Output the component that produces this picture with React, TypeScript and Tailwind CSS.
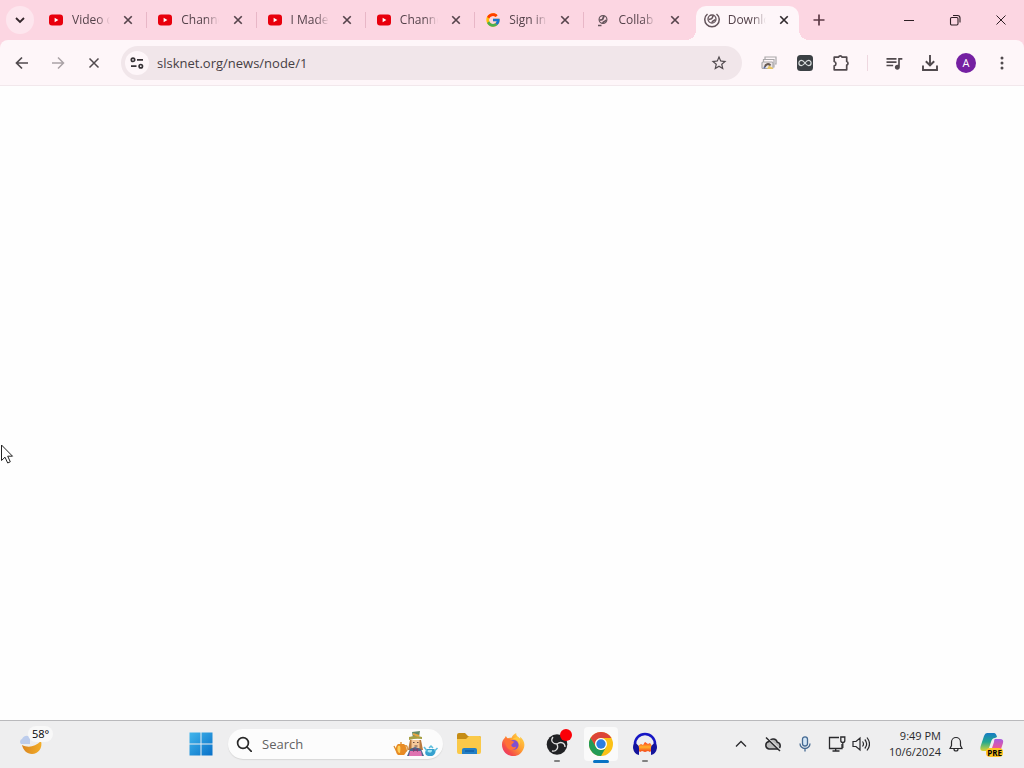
import React from "react";
import { FcGoogle } from "react-icons/fc";
import { MdQueueMusic, MdStarBorder } from "react-icons/md";

type Kind = "youtube" | "google" | "globe" | "loading";

const tabs: { title: string; kind: Kind; active?: boolean }[] = [
  { title: "Video d", kind: "youtube" },
  { title: "Channe", kind: "youtube" },
  { title: "I Made", kind: "youtube" },
  { title: "Channe", kind: "youtube" },
  { title: "Sign in", kind: "google" },
  { title: "Collab", kind: "globe" },
  { title: "Downlo", kind: "loading", active: true },
];

function YouTube() {
  return (
    <svg viewBox="0 0 16 16" className="size-4 shrink-0">
      <rect x="1" y="2.5" width="14" height="11" rx="3" fill="#e8000d" />
      <path d="M6.6 5.8v4.4L10.4 8z" fill="#fff" />
    </svg>
  );
}

function Globe() {
  return (
    <svg viewBox="0 0 16 16" className="size-4 shrink-0" fill="none" stroke="#64545b">
      <circle cx="9" cy="7.5" r="3.9" strokeWidth="1.2" />
      <path d="M5.5 8.2c1.5-.7 2 .2 3-.8s.2-2 1.8-3.4" strokeWidth="1.8" />
      <path d="M8.8 11.3c.2-2 2-1.400 3.500-3.400" strokeWidth="1.700" />
      <path d="M4 13.500h3.500" strokeWidth="1.500" />
    </svg>
  );
}

function LoadingGlobe() {
  return (
    <svg viewBox="0 0 16 16" className="size-4 shrink-0" fill="none" stroke="#64545b">
      <path d="M3.500 2A7.200 7.200 0 1 0 12.500 2" strokeWidth="1.500" />
      <circle cx="8" cy="7" r="4" strokeWidth="1.300" />
      <path d="M4.800 7.500c2-.7 2.200-.2 3-1s.2-1.800 1.700-2.500M8 10.300c.3-1.600 1.800-1.200 3.400-2.800" strokeWidth="1.500" />
    </svg>
  );
}

function Favicon({ kind }: { kind: Kind }) {
  if (kind === "youtube") return <YouTube />;
  if (kind === "google") return <FcGoogle className="size-4 shrink-0" />;
  if (kind === "globe") return <Globe />;
  return <LoadingGlobe />;
}

function Cross({ className }: { className: string }) {
  return (
    <svg viewBox="0 0 12 12" className={className} fill="none" stroke="currentColor">
      <path d="M1.500 1.500l9 9M10.500 1.500l-9 9" />
    </svg>
  );
}

function TabStrip() {
  return (
    <header className="flex h-10 bg-[#fcd6e2] pl-1.5">
      <button aria-label="Search tabs" className="mt-1.5 flex size-7 shrink-0 items-center justify-center rounded-full bg-[#fde6ee] text-[#33262b]">
        <svg viewBox="0 0 10 10" className="size-2.5" fill="none" stroke="currentColor" strokeWidth="1.800"><path d="M1 3l4 4 4-4" /></svg>
      </button>
      <nav aria-label="Tabs" className="ml-1 flex min-w-0 max-w-[765px] flex-1">
        {tabs.map((tab, i) => (
          <div key={i} className="relative flex min-w-0 flex-1 items-end">
            <div className={tab.active
              ? "relative flex h-[34px] min-w-0 flex-1 items-center rounded-t-[10px] bg-[#fef6f9] pb-1.5 pl-2 pr-2.5 ml-0.5 mr-1"
              : "flex h-[34px] min-w-0 flex-1 items-center pb-1.5 pl-2.5 pr-3.5"}>
              {tab.active && (
                <>
                  <span className="absolute bottom-0 right-full size-2.5 bg-[radial-gradient(circle_at_0_0,#fcd6e2_10px,#fef6f9_10px)]" />
                  <span className="absolute bottom-0 left-full size-2.5 bg-[radial-gradient(circle_at_100%_0,#fcd6e2_10px,#fef6f9_10px)]" />
                </>
              )}
              <Favicon kind={tab.kind} />
              <a href="#page" className="ml-2 block w-[38px] min-w-0 overflow-hidden whitespace-nowrap mask-r-from-65% mask-r-to-100% text-xs leading-4 text-[#55434b]">
                {tab.title}
              </a>
              <button aria-label={"Close " + tab.title} className={tab.active ? "ml-auto text-[#302a2d]" : "ml-auto text-[#55434b]"}>
                <Cross className="size-2.5 stroke-2" />
              </button>
            </div>
            {i < 5 && <span className="absolute right-0 top-3 h-4 w-px bg-[#e8b7c7]" />}
          </div>
        ))}
      </nav>
      <button aria-label="New tab" className="mt-1.5 ml-0.5 flex size-7 shrink-0 items-center justify-center text-[#5c3a46]">
        <svg viewBox="0 0 12 12" className="size-3" fill="none" stroke="currentColor" strokeWidth="1.700"><path d="M6 .5v11M.5 6h11" /></svg>
      </button>
      <div className="ml-auto flex shrink-0 text-[#2d1f24]">
        <button aria-label="Minimize" className="flex w-[46px] items-center justify-center"><span className="h-px w-2.5 bg-current" /></button>
        <button aria-label="Restore" className="flex w-[46px] items-center justify-center">
          <svg viewBox="0 0 12 12" className="size-3" fill="none" stroke="currentColor" strokeWidth="1.100">
            <rect x="1.500" y="3.500" width="7.500" height="7.500" rx="1.200" />
            <path d="M4 1.500h4.500a2.500 2.500 0 0 1 2.500 2.500v4.500" />
          </svg>
        </button>
        <button aria-label="Close window" className="flex w-[46px] items-center justify-center"><Cross className="size-3 stroke-1" /></button>
      </div>
    </header>
  );
}

function Toolbar() {
  const btn = "flex size-9 shrink-0 items-center justify-center";
  return (
    <div className="bg-[#fcd6e2]">
      <div className="flex h-[46px] items-center rounded-t-lg border-b border-[#f2e8ec] bg-[#fef6f9] px-1 text-[#514a4e]">
        <button aria-label="Back" className={btn}>
          <svg viewBox="0 0 16 16" className="size-4" fill="none" stroke="currentColor" strokeWidth="1.700"><path d="M14 8H3M8 2.500L2.500 8 8 13.500" /></svg>
        </button>
        <button aria-label="Forward" className={btn + " text-[#aaa2a6]"}>
          <svg viewBox="0 0 16 16" className="size-4" fill="none" stroke="currentColor" strokeWidth="1.500"><path d="M2 8h11M8 2.500L13.500 8 8 13.500" /></svg>
        </button>
        <button aria-label="Stop loading" className={btn}><Cross className="size-3 stroke-[1.5]" /></button>
        <form className="ml-[9px] flex h-[34px] min-w-0 flex-1 items-center rounded-full bg-[#f1e6ea] pl-1 pr-3.5" onSubmit={(e) => e.preventDefault()}>
          <button type="button" aria-label="Site information" className="flex size-6 shrink-0 items-center justify-center rounded-full bg-[#fef6f9]">
            <svg viewBox="0 0 14 14" className="size-3.5" fill="none" stroke="#373236" strokeWidth="1.700">
              <circle cx="3" cy="3.800" r="1.700" /><path d="M7 3.800h6M1 10.200h5.500" /><circle cx="10.800" cy="10.200" r="1.700" />
            </svg>
          </button>
          <input aria-label="Address" defaultValue="slsknet.org/news/node/1" className="ml-2 min-w-0 flex-1 bg-transparent text-[13px] leading-5 text-[#464044] outline-none" />
          <button type="button" aria-label="Bookmark this page"><MdStarBorder className="size-[18px]" /></button>
        </form>
        <div className="ml-[9px] flex shrink-0 items-center">
          <button aria-label="Screenshot extension" className={btn}>
            <svg viewBox="0 0 16 16" className="size-4" fill="none" stroke="#aaa8aa" strokeWidth="1.200">
              <path d="M4 4V2h11v7h-1" /><path d="M2.500 7V4.500h10.500v8" /><rect x="1" y="7" width="11" height="6.500" rx="1" fill="#eee6e6" />
              <path d="M4 12a3 3 0 0 1 5.500-1.500" stroke="#665953" strokeWidth="2" /><path d="M8 10.500l4 2.500v1H6z" fill="#e7c563" stroke="none" />
              <circle cx="3.500" cy="12.500" r="1" fill="#536ca6" stroke="none" />
            </svg>
          </button>
          <button aria-label="Infinity extension" className={btn}>
            <svg viewBox="0 0 16 16" className="size-4">
              <rect width="16" height="16" rx="3.500" fill="#3b4044" />
              <path d="M8 8C6.500 6 5.500 5.400 4.500 5.400a2.600 2.600 0 0 0 0 5.200C5.500 10.600 6.500 10 8 8s2.500-2.600 3.500-2.600a2.600 2.600 0 0 1 0 5.200c-1 0-2-.6-3.500-2.600z" fill="none" stroke="#d8dddd" strokeWidth="1.200" />
            </svg>
          </button>
          <button aria-label="Extensions" className={btn}>
            <svg viewBox="0 0 20 20" className="size-5" fill="none" stroke="currentColor" strokeWidth="1.700" strokeLinejoin="round">
              <path d="M3.200 4.200h4.300a1.900 1.900 0 0 1 3.600 0h4.600v4.300a1.900 1.900 0 0 1 0 3.600v4.700H3.200v-4a2.200 2.200 0 0 0 0-4.300z" />
            </svg>
          </button>
          <span className="mx-2 h-4 w-px bg-[#eed8e0]" />
          <button aria-label="Media controls" className={btn}><MdQueueMusic className="size-5" /></button>
          <button aria-label="Downloads" className={btn}>
            <svg viewBox="0 0 18 18" className="size-[18px]" fill="none" stroke="currentColor" strokeWidth="1.900"><path d="M9 1v10M4.800 7.200L9 11.300l4.200-4.100M2 11.500V16h14v-4.500" /></svg>
          </button>
          <button aria-label="Profile" className={btn}><span className="flex size-5 items-center justify-center rounded-full bg-[#7520a2] text-[11px] leading-5 text-white">A</span></button>
          <button aria-label="Menu" className={btn}>
            <svg viewBox="0 0 4 16" className="h-4 w-1" fill="currentColor"><circle cx="2" cy="3" r="1.500" /><circle cx="2" cy="8" r="1.500" /><circle cx="2" cy="13" r="1.500" /></svg>
          </button>
        </div>
      </div>
    </div>
  );
}

function Tea() {
  return (
    <svg viewBox="0 0 46 26" className="h-[26px] w-[46px] shrink-0">
      <path d="M5 13h6c3 2 3 9 0 11H5c-3-2-3-9 0-11z" fill="#e88b24" />
      <path d="M5 15c2-1 3 0 2 7-3 0-3-5-2-7z" fill="#ffd05c" />
      <path d="M3.500 20L1 15M12 15c3-2 3 5 0 6M8 13v-2" stroke="#dc8b2b" strokeWidth="1.300" fill="none" />
      <path d="M17 9h11l2 10H15z" fill="#b9793e" />
      <path d="M18.500 9h8v8h-8z" fill="#f5c89b" />
      <path d="M19 1l8-1-1 6-6 1z" fill="#638a67" /><path d="M16 6q7-2 13 0v2q-6-1-13 1z" fill="#a6a044" />
      <path d="M20 3l6 2" stroke="#e7a641" strokeWidth="2" />
      <path d="M20 11.500h1.500M24 11.500h1.500M21.500 15h3" stroke="#684b42" />
      <path d="M14 25l3-7 5-2 6 2 3 7z" fill="#4c678d" /><path d="M17 20h11l1 5H16z" fill="#df73b1" /><path d="M20 17l2.500 2 2.500-2v4l-2.500-2-2.500 2z" fill="#803c6b" />
      <path d="M34 18h7c3 2 1 6-2 7h-4c-3-1-4-4-1-7z" fill="#36a1cf" /><path d="M31 16l4 5M41.500 20l3-3M36 17l2-2 2 2" stroke="#5bbddd" strokeWidth="1.500" fill="none" />
      <path d="M35 19h4c0 3-2 3-4 2z" fill="#a3e5f2" />
    </svg>
  );
}

function ChromeLogo() {
  return (
    <svg viewBox="0 0 24 24" className="size-6">
      <circle cx="12" cy="12" r="12" fill="#fbc116" />
      <path d="M1.600 6A12 12 0 0 0 12 24l5.200-9A6 6 0 0 1 6.800 15z" fill="#239b56" />
      <path d="M1.600 6A12 12 0 0 1 22.400 6H12a6 6 0 0 0-5.200 9z" fill="#dc4437" />
      <path d="M1.600 6l5.200 9L12 20l-5-1z" fill="#239b56" />
      <circle cx="12" cy="12" r="6" fill="#fff" /><circle cx="12" cy="12" r="4.700" fill="#2c7de1" />
    </svg>
  );
}

function Taskbar() {
  const app = "relative flex h-11 w-11 shrink-0 items-center justify-center";
  return (
    <footer className="flex h-12 items-center border-t border-[#b9b9bc] bg-[#eeeeef] pb-px text-[#29292c]">
      <button aria-label="Weather, 58 degrees" className="ml-4 flex h-10 w-9 items-center">
        <span className="relative block size-7">
          <svg viewBox="0 0 28 28" className="size-7">
            <defs><linearGradient id="moon" x1="0" x2="1"><stop stopColor="#d98522" /><stop offset="1" stopColor="#f3ad27" /></linearGradient></defs>
            <path d="M6 15c6 3 13 2 19-4 2 7-3 13-9 13-5 0-9-4-10-9z" fill="url(#moon)" />
            <path d="M5 14a3 3 0 0 1 1-5c2-4 7-4 8-1v6z" fill="#bcccec" />
          </svg>
          <span className="absolute -top-1 left-3 rounded-full bg-[#f8f8f8] px-1 text-[11px] leading-4 text-black">58°</span>
        </span>
      </button>
      <div className="ml-[127px] flex shrink-0 items-center">
        <button aria-label="Start" className={app}>
          <svg viewBox="0 0 24 24" className="size-6">
            <defs><linearGradient id="win" x2="1" y2="1"><stop stopColor="#42b6ec" /><stop offset="1" stopColor="#0870c8" /></linearGradient></defs>
            <path d="M.5.5h11v11H.5zM12.500.5h11v11h-11zM.5 12.500h11v11H.5zM12.500 12.500h11v11h-11z" fill="url(#win)" />
          </svg>
        </button>
        <label className="ml-[5px] flex h-[30px] w-[215px] items-center rounded-full bg-[#fcfcfc] pl-2 pr-1 shadow-[0_1px_1px_#d7d7d7]">
          <svg viewBox="0 0 16 16" className="size-4 shrink-0" fill="none" stroke="#292929" strokeWidth="1.700"><circle cx="7" cy="7" r="5.400" /><path d="M11 11l4.300 4.300" strokeLinecap="round" /></svg>
          <input aria-label="Search" placeholder="Search" className="ml-2.5 min-w-0 flex-1 bg-transparent text-[13px] leading-5 outline-none placeholder:text-[#626262]" />
          <Tea />
        </label>
        <button aria-label="File Explorer" className={app + " ml-1"}>
          <svg viewBox="0 0 26 24" className="h-6 w-[26px]">
            <path d="M1 3q0-2 2-2h6l3 3h11q2 0 2 2v4H1z" fill="#c58c15" /><path d="M1 7h9l3-3h10q2 0 2 2v14q0 2-2 2H3q-2 0-2-2z" fill="#fac949" />
            <path d="M6 22v-4q0-2 2-2h11q2 0 2 2v4z" fill="#237fc5" /><path d="M9 19h9" stroke="#125fa7" strokeWidth="1.500" />
          </svg>
        </button>
        <button aria-label="Firefox" className={app}>
          <svg viewBox="0 0 24 24" className="size-[23px]">
            <defs><linearGradient id="fox" x1="1" x2="0" y2="1"><stop stopColor="#ffe44b" /><stop offset=".45" stopColor="#ff9b32" /><stop offset=".75" stopColor="#f44c4b" /><stop offset="1" stopColor="#e82b80" /></linearGradient></defs>
            <path d="M4 3l2 3c1-1 3-1 4-1 1-3 3-4 5-5-1 3 2 4 4 6V4c4 4 5 7 4 11-2 6-6 9-11 9C5 24 0 19 0 12c0-3 1-5 3-7z" fill="url(#fox)" />
            <circle cx="12" cy="12.500" r="5.300" fill="#8050cf" /><path d="M3 6c3-1 5 0 7 2l3 1-3 3c-1 2 2 4 5 2-1 4-6 5-9 2-2-2-3-6-3-10z" fill="#ff7137" /><path d="M11 6c4 0 7 3 7 7 2-3 1-7-2-9z" fill="#ffca3d" />
          </svg>
        </button>
        <button aria-label="OBS Studio" className={app}>
          <svg viewBox="0 0 24 24" className="size-6">
            <circle cx="12" cy="12.500" r="10.300" fill="#202124" />
            <path d="M12 12C8 12 5 9 8 5M12 12c4-3 8-1 8 3M12 12c2 4-1 8-5 7" fill="none" stroke="#dedede" strokeWidth="1.300" />
          </svg>
          <span className="absolute right-[7px] top-[7px] size-3 rounded-full bg-[#fb0007]" /><span className="absolute bottom-1 h-0.5 w-1.5 rounded-full bg-[#818181]" />
        </button>
        <button aria-label="Google Chrome" className={app}>
          <span className="flex size-[34px] items-center justify-center rounded bg-[#fafafa]"><ChromeLogo /></span>
          <span className="absolute bottom-[3px] h-[3px] w-4 rounded-full bg-[#0873c4]" />
        </button>
        <button aria-label="Audacity" className={app}>
          <svg viewBox="0 0 26 24" className="h-6 w-[26px]">
            <defs><linearGradient id="wave" x2="0" y2="1"><stop stopColor="#ff3718" /><stop offset=".5" stopColor="#ffb02a" /><stop offset="1" stopColor="#f43e15" /></linearGradient></defs>
            <path d="M6 14l3-2 2 1 2-3 3 2 2-1 2 3v4l-2 2-2-1-3 1-3-1-2 1-2-2z" fill="url(#wave)" />
            <path d="M3 15v-3a10 10 0 0 1 20 0v3" fill="none" stroke="#1616c4" strokeWidth="2.600" />
            <path d="M3 11q4 2 4 5v7q-5-1-6-7 0-4 2-5zm20 0q-4 2-4 5v7q5-1 6-7 0-4-2-5z" fill="#14149c" />
          </svg>
          <span className="absolute bottom-1 h-0.5 w-1.5 rounded-full bg-[#818181]" />
        </button>
      </div>
      <div className="ml-auto flex shrink-0 items-center pr-[11px]">
        <button aria-label="Show hidden icons" className="flex w-8 justify-center"><svg viewBox="0 0 12 12" className="size-3" fill="none" stroke="currentColor" strokeWidth="1.300"><path d="M1 8.500l5-5 5 5" /></svg></button>
        <button aria-label="Cloud sync off" className="flex w-8 justify-center">
          <svg viewBox="0 0 18 16" className="h-4 w-[18px]" fill="#b9b9b9" stroke="#29292c" strokeWidth="1.500"><path d="M5 13a3.800 3.800 0 0 1 0-7.500 4.500 4.500 0 0 1 8.300.8A3.500 3.500 0 0 1 14 13z" /><path d="M2.800 1.200L17 14.500" stroke="#eeeeef" strokeWidth="1.500" /><path d="M2 1.500L16 15" /></svg>
        </button>
        <button aria-label="Microphone" className="flex w-8 justify-center">
          <svg viewBox="0 0 16 16" className="size-4" fill="none" stroke="#456a93" strokeWidth="1.300"><rect x="5.500" y=".8" width="5" height="9.200" rx="2.500" fill="#d4e6f6" /><path d="M3 7.500a5 5 0 0 0 10 0M8 12.500v3" /></svg>
        </button>
        <button aria-label="Network and volume" className="flex w-[52px] items-center justify-center gap-1.5 pl-1">
          <svg viewBox="0 0 18 18" className="size-[18px] shrink-0" fill="none" stroke="currentColor" strokeWidth="1.300"><path d="M11 2.500H1.500v11H14V9M7.700 13.500V16M4.500 16h7" /><path d="M12.800 2h4v3.500a2 2 0 0 1-4 0zM14.800 7.500V13" /></svg>
          <svg viewBox="0 0 18 16" className="h-4 w-[18px] shrink-0" fill="none" stroke="currentColor" strokeWidth="1.200"><path d="M1 5.500h3L8 2v12l-4-3.500H1zM10.500 5.500q2 2.500 0 5M12.800 3.500q3.700 4.500 0 9M15 1.500q5 6.500 0 13" /></svg>
        </button>
        <button aria-label="Date and time" className="w-[68px] whitespace-nowrap text-right text-[11px] leading-4"><time dateTime="2024-10-06T21:49">9:49 PM<br />10/6/2024</time></button>
        <button aria-label="Notifications" className="flex w-[30px] justify-center"><svg viewBox="0 0 16 16" className="size-4" fill="none" stroke="currentColor" strokeWidth="1.200"><path d="M2 12.500l1.500-3V6a4.500 4.500 0 0 1 9 0v3.500l1.500 3zM6 13a2 2 0 0 0 4 0" /></svg></button>
        <button aria-label="Copilot preview" className="relative flex w-[42px] justify-center">
          <svg viewBox="0 0 24 24" className="size-6">
            <defs><linearGradient id="cop" x2="0" y2="1"><stop stopColor="#167bc4" /><stop offset=".5" stopColor="#23a890" /><stop offset="1" stopColor="#d6d435" /></linearGradient><linearGradient id="cop2" x2="0" y2="1"><stop stopColor="#a75ce1" /><stop offset=".6" stopColor="#f15891" /><stop offset="1" stopColor="#f8a243" /></linearGradient></defs>
            <path d="M7 1h7q2 0 3 4l-2 1q-3 0-4 4l-2 6q-1 3-3 3H3q-4 0-2-6L4 4q1-3 3-3z" fill="url(#cop)" /><path d="M15 7h5q4 0 3 4l-3 9q-1 3-4 3H9q-2 0-3-3h3q2 0 3-4l2-6q0-3 1-3z" fill="url(#cop2)" />
          </svg>
          <span className="absolute right-2.5 top-4 rounded-sm bg-[#ffc423] px-px text-[8px] font-bold leading-[9px] text-black">PRE</span>
        </button>
      </div>
    </footer>
  );
}

export default function App() {
  return (
    <div className="flex min-h-screen flex-col bg-white font-['Open_Sans','Noto_Sans',sans-serif]">
      <TabStrip />
      <Toolbar />
      <main id="page" className="relative flex-1 bg-[#fefefe]">
        <svg viewBox="0 0 14 20" className="absolute left-0 top-[56.4%] h-5 w-3.5" fill="#fff" stroke="#222" strokeWidth="1">
          <path d="M1.500 1v15.500l3.500-3.300 2.700 5.800 2.600-1.200-2.600-5.600h4.800z" />
        </svg>
      </main>
      <Taskbar />
    </div>
  );
}
